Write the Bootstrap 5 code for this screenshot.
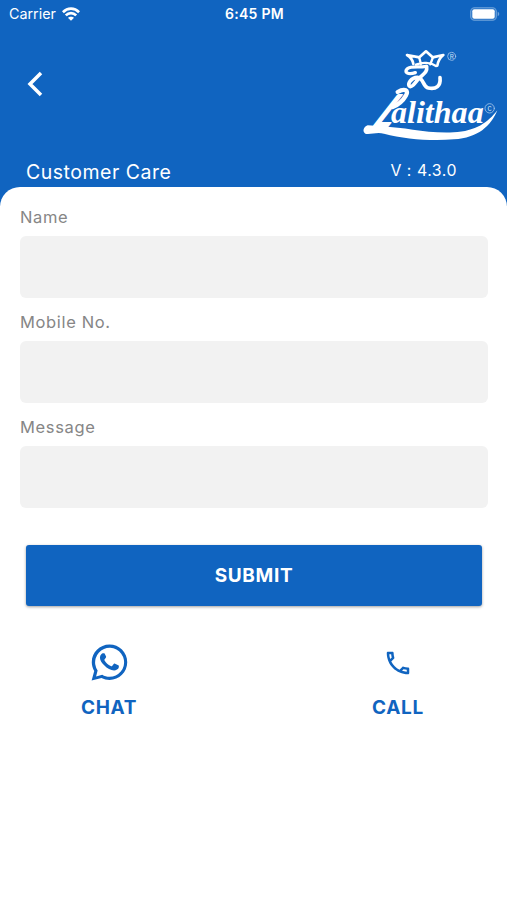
<!DOCTYPE html>
<html lang="en">
<head>
<meta charset="utf-8">
<meta name="viewport" content="width=device-width, initial-scale=1">
<title>Customer Care</title>
<link href="https://cdn.jsdelivr.net/npm/bootstrap@5.3.0/dist/css/bootstrap.min.css" rel="stylesheet">
<style>
:root { --brand: #1064c0; }
body { font-family: Inter, "Liberation Sans", sans-serif; min-height: 900px; }
svg { display: block; }
.app-header { background: var(--brand); height: 206px; }
.status { height: 28px; font-size: 14.3px; padding: 0 7px 0 9px; line-height: 28px; }
.status-side { flex: 1 1 0; }
.status-time { font-size: 14px; font-weight: 600; letter-spacing: .3px; }
.wifi { margin-left: 6px; }
.brand-row { height: 128px; padding: 12px 0 0 26px; }
.back { width: 18px; height: 26px; margin-top: 31px; }
.title-row { height: 31px; padding: 0 50px 0 26px; }
.page-title { font-size: 19.5px; letter-spacing: .5px; line-height: 32px; font-weight: 400; }
.version { font-size: 15.8px; letter-spacing: .55px; line-height: 30px; }
.sheet { margin-top: -19px; border-radius: 20px 20px 0 0; padding: 15px 19px 0 20px; }
.field-label { color: #868686; font-size: 16.5px; letter-spacing: .65px; line-height: 30px; height: 34px; }
.field { height: 62px; background: #f2f2f2; border: 0; border-radius: 6px; margin-bottom: 9px; }
.submit { --bs-btn-bg: #1064c0; --bs-btn-hover-bg: #0d57a8; height: 61px; margin: 28px 6px 0; width: calc(100% - 12px); border-radius: 3px; border: 0; padding-top: 8px; font-size: 19px; font-weight: 700; letter-spacing: .65px; box-shadow: 0 1px 3px rgba(0,0,0,.38); }
.contact { color: var(--brand); font-size: 19px; font-weight: 700; letter-spacing: .7px; line-height: 24px; width: 90px; }
.contact-icon { height: 37px; margin-bottom: 15px; }
.contacts { padding: 38px 45px 0 44px; }
</style>
<script src="https://cdn.jsdelivr.net/npm/bootstrap@5.3.0/dist/js/bootstrap.bundle.min.js"></script>
</head>
<body class="bg-white overflow-hidden">
<header class="app-header text-white">
  <div class="status d-flex align-items-center">
    <div class="status-side d-flex align-items-center">
      <span>Carrier</span>
      <svg class="wifi" width="18" height="14" viewBox="0 0 18 14" fill="none" stroke="#fff" stroke-width="2.7"><path d="M.9 5.200C5.500.5 12.500.5 17.100 5.200M3.800 8.400c3-3 7.400-3 10.400 0"/><path d="M9 13.700 5.900 10.800c1.500-1.500 4.700-1.500 6.200 0Z" fill="#fff" stroke="none"/></svg>
    </div>
    <div class="status-time">6:45 PM</div>
    <div class="status-side d-flex justify-content-end">
      <svg width="30" height="14" viewBox="0 0 30 14"><rect x=".7" y=".7" width="25.600" height="12.600" rx="3.800" fill="#2a75c7" stroke="#6fa3da" stroke-width="1.100"/><rect x="2.300" y="2.300" width="22.400" height="9.400" rx="2" fill="#fff"/><path d="M27.700 4.800c2 .7 2 3.700 0 4.400Z" fill="#6fa3da"/></svg>
    </div>
  </div>
  <div class="brand-row d-flex justify-content-between">
    <a href="#" class="back" aria-label="Back"><svg width="18" height="26" viewBox="0 0 18 26" fill="none" stroke="#fff" stroke-width="3.500"><path d="M15 2 4 13l11 11"/></svg></a>
    <svg width="152" height="110" viewBox="0 0 456 330" fill="none" stroke="#fff" stroke-linecap="round" stroke-linejoin="round">
      <!-- crown -->
      <path d="M175 72c-2-13-9-21-19-27l37 7 20-18 20 18 32-7c-10 8-16 18-18 32" stroke-width="8"/>
      <path d="M193 54l5 19M233 54l-7 19M183 74c18-8 44-7 60 4" stroke-width="7"/>
      <!-- monogram -->
      <path d="M213 79c-20 4-45-2-56 7-11 10 1 20 24 12" stroke-width="10"/>
      <path d="M215 80c3 18-12 23-24 36-10 12-20 27-27 23-8-6 4-27 23-27 20 1 16 29 33 32 23 5 38-6 35-31" stroke-width="11"/>
      <!-- wordmark -->
      <g fill="#fff" font-weight="700">
        <text transform="translate(43 266) skewX(-38)" font-family="'Liberation Sans', sans-serif" font-size="146" textLength="52" lengthAdjust="spacingAndGlyphs" stroke-width="9">L</text>
        <text x="108" y="248" font-family="'Liberation Serif', serif" font-style="italic" font-size="92" textLength="278" lengthAdjust="spacingAndGlyphs" stroke="none">alithaa</text>
      </g>
      <path d="M128 156c22-13 34-4 25 10-9 16-23 28-40 35" stroke-width="13"/>
      <path d="M38 256c-14 5-16 20-7 25 17 3 35-6 56 0 62 17 142 22 210 17 73-4 110-40 130-87-28 36-64 63-131 66-86 4-145-17-214-17-17 0-27-4-44-4Z" fill="#fff" stroke="none"/>
      <g stroke="#a5c5e9" stroke-width="2.500"><circle cx="290" cy="49" r="12"/><circle cx="404" cy="205" r="14"/></g>
      <g fill="#d2e2f4" stroke="none" font-family="Inter, sans-serif" text-anchor="middle"><text x="290" y="56" font-size="19">R</text><text x="404" y="213" font-size="22">c</text></g>
    </svg>
  </div>
  <div class="title-row d-flex justify-content-between">
    <h1 class="page-title mb-0">Customer Care</h1>
    <span class="version">V : 4.3.0</span>
  </div>
</header>
<main class="sheet bg-white position-relative">
  <form>
    <label class="field-label d-block" for="name">Name</label>
    <input class="field form-control" id="name" type="text">
    <label class="field-label d-block" for="mobile">Mobile No.</label>
    <input class="field form-control" id="mobile" type="tel">
    <label class="field-label d-block" for="message">Message</label>
    <input class="field form-control" id="message" type="text">
    <button class="submit btn btn-primary" type="button">SUBMIT</button>
  </form>
  <div class="contacts d-flex justify-content-between">
    <a href="#" class="contact text-decoration-none d-flex flex-column align-items-center">
      <span class="contact-icon d-flex align-items-center"><svg width="37" height="37" viewBox="0 0 24 24" fill="#1064c0"><path d="M12 .4C5.600.4.500 5.500.500 11.800c0 2 .6 4 1.600 5.700L.4 23.700l6.400-1.600c1.600.8 3.400 1.200 5.200 1.200 6.300 0 11.500-5.100 11.500-11.500S18.300.4 12 .4Zm0 20.900c-1.700 0-3.300-.4-4.700-1.300l-4 1 1-3.800a9.400 9.400 0 1 1 7.700 4.100Z"/><path d="M8.900 6.400C8.700 5.900 8.400 6 7.700 6c-.5 0-1.900 1.100-1.900 2.900 0 1.900 1.300 3.500 2.600 4.800 2.300 2.400 4.300 3.400 6.600 3.500 1.200 0 2.800-1 3-2 .2-.9.100-1.200-.3-1.400l-2.100-1c-.5-.2-.7-.1-1 .3l-.9 1.100c-.3.300-.5.300-.9.100-1.800-.8-3-2-4-3.600-.2-.4-.1-.6.200-.9l.7-1c.2-.3.100-.6 0-.8Z"/></svg></span>
      CHAT
    </a>
    <a href="#" class="contact text-decoration-none d-flex flex-column align-items-center">
      <span class="contact-icon d-flex align-items-center"><svg width="30" height="30" viewBox="0 0 24 24" fill="#1064c0"><path d="M6.540 5c.06.890.210 1.760.450 2.590l-1.200 1.200c-.410-1.200-.670-2.470-.760-3.790h1.510m9.860 12.020c.850.240 1.720.390 2.600.450v1.490c-1.320-.090-2.590-.350-3.800-.750l1.200-1.190M7.500 3H4c-.550 0-1 .450-1 1 0 9.390 7.610 17 17 17 .550 0 1-.450 1-1v-3.490c0-.550-.450-1-1-1-1.240 0-2.450-.200-3.570-.570-.360-.120-.750-.030-1.020.240l-2.200 2.200c-2.830-1.450-5.150-3.760-6.590-6.590l2.200-2.200c.280-.280.360-.670.250-1.020C8.700 6.450 8.500 5.250 8.500 4c0-.550-.450-1-1-1Z"/></svg></span>
      CALL
    </a>
  </div>
</main>
</body>
</html>
